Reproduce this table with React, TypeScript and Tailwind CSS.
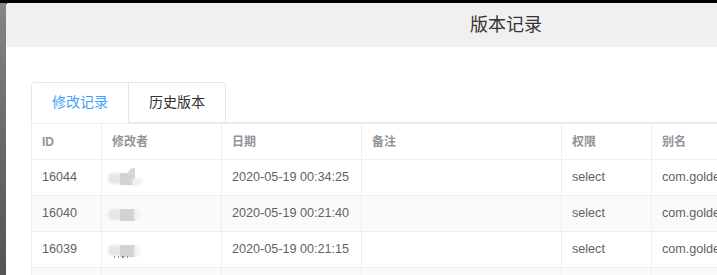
import React from "react";

const cjk = { fontFamily: '"Liberation Sans", "Noto Sans CJK SC", sans-serif' };

type Row = { id: string; date: string; perm: string; alias: string };

const rows: Row[] = [
  { id: "16044", date: "2020-05-19 00:34:25", perm: "select", alias: "com.golden.app" },
  { id: "16040", date: "2020-05-19 00:21:40", perm: "select", alias: "com.golden.app" },
  { id: "16039", date: "2020-05-19 00:21:15", perm: "select", alias: "com.golden.app" },
  { id: "16031", date: "2020-05-18 23:58:02", perm: "select", alias: "com.golden.app" },
];

const cols = "grid grid-cols-[70px_120px_140px_200px_90px_1fr]";

function MaskedName({ variant }: { variant: number }) {
  // Blurred placeholder for a hidden user name
  return (
    <div className="relative h-[16px] w-[40px]">
      <div className="absolute left-[6px] top-[3px] h-[11px] w-[16px] rounded-full bg-[#e6e6e6] blur-[1px]" />
      <div className="absolute left-[18px] top-[3px] h-[12px] w-[15px] bg-[#d2d2d2] blur-[0.6px]" />
      {variant === 0 && (
        <div className="absolute left-[26px] top-[-2px] h-[8px] w-[7px] rounded-tl-[6px] bg-[#d6d6d6] blur-[0.6px]" />
      )}
      {variant === 0 && (
        <div className="absolute left-[30px] top-[8px] h-[8px] w-[10px] rounded-full bg-[#eef2f6] blur-[1px]" />
      )}
      {variant !== 0 && (
        <div className="absolute left-[32px] top-[3px] h-[11px] w-[6px] rounded-full bg-[#eef3f8] blur-[1px]" />
      )}
      {variant === 2 && (
        <div className="absolute left-[12px] top-[14px] flex gap-[3px]">
          <span className="h-[2px] w-[1px] bg-[#999]" />
          <span className="h-[2px] w-[1px] bg-[#999]" />
          <span className="h-[2px] w-[2px] bg-[#888]" />
          <span className="h-[2px] w-[1px] bg-[#999]" />
        </div>
      )}
    </div>
  );
}

export default function App() {
  return (
    <div className="h-[275px] w-[717px] overflow-hidden bg-black pt-[3px]" style={cjk}>
      <div className="flex h-[272px]">
        <div className="w-[6px] shrink-0 bg-gradient-to-b from-[#858585] via-[#6a6a6a] to-[#545454]" />
        <div className="flex w-[1000px] shrink-0 flex-col overflow-hidden rounded-tl-[3px] bg-white">
          <div className="flex h-[44px] shrink-0 items-center justify-center bg-[#f0f0f0] text-[18px] text-[#333]">
            版本记录
          </div>
          <div className="pl-[25px] pt-[35px]">
            {/* tab header */}
            <div className="flex border-b border-[#e4e7ed]">
              <div className="-mb-px flex rounded-t-[4px] border border-b-0 border-[#e4e7ed]">
                <div className="flex h-[40px] items-center border-b border-white px-[20px] text-[14px] text-[#409eff]">
                  修改记录
                </div>
                <div className="flex h-[39px] items-center border-l border-[#e4e7ed] px-[20px] text-[14px] text-[#303133]">
                  历史版本
                </div>
              </div>
            </div>
            {/* table */}
            <div className="border-l border-t border-[#ebeef5]">
              <div className={`${cols} h-[36px] border-b border-[#ebeef5] text-[12px] font-bold text-[#909399]`}>
                <div className="flex items-center border-r border-[#ebeef5] pl-[10px]">ID</div>
                <div className="flex items-center border-r border-[#ebeef5] pl-[10px]">修改者</div>
                <div className="flex items-center border-r border-[#ebeef5] pl-[10px]">日期</div>
                <div className="flex items-center border-r border-[#ebeef5] pl-[10px]">备注</div>
                <div className="flex items-center border-r border-[#ebeef5] pl-[10px]">权限</div>
                <div className="flex items-center pl-[10px]">别名</div>
              </div>
              {rows.map((r, i) => (
                <div
                  key={r.id}
                  className={`${cols} h-[36px] border-b border-[#ebeef5] text-[12.6px] text-[#606266] ${
                    i % 2 === 1 ? "bg-[#fafafa]" : "bg-white"
                  }`}
                >
                  <div className="flex items-center border-r border-[#ebeef5] pl-[10px]">{r.id}</div>
                  <div className="flex items-center border-r border-[#ebeef5] pl-[0px]">
                    <MaskedName variant={i} />
                  </div>
                  <div className="flex items-center border-r border-[#ebeef5] pl-[10px]">{r.date}</div>
                  <div className="flex items-center border-r border-[#ebeef5] pl-[10px]" />
                  <div className="flex items-center border-r border-[#ebeef5] pl-[10px]">{r.perm}</div>
                  <div className="flex items-center whitespace-nowrap pl-[10px]">{r.alias}</div>
                </div>
              ))}
            </div>
          </div>
        </div>
      </div>
    </div>
  );
}
